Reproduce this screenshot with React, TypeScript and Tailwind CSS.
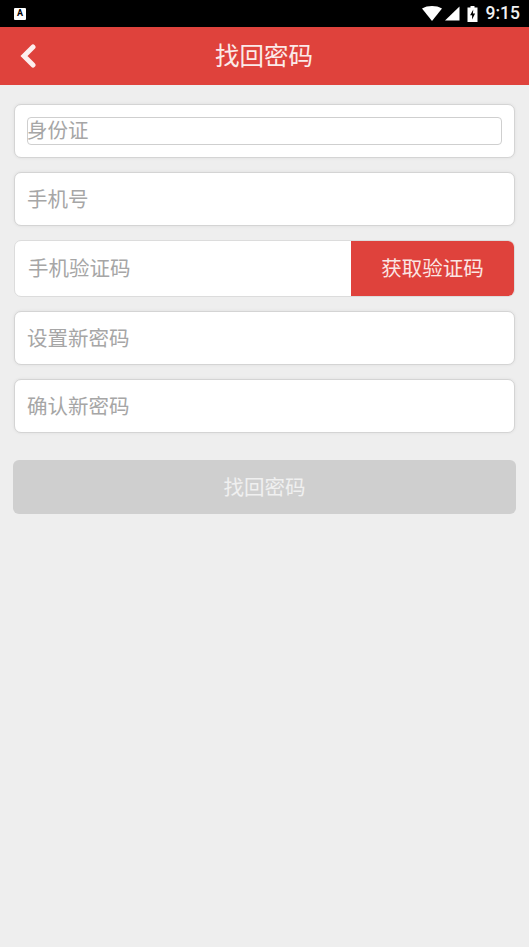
const cjk = "font-['Roboto','Noto_Sans_CJK_SC',sans-serif]";

function Field({ label }: { label: string }) {
  return (
    <div className="flex h-[54px] items-center rounded-[7px] border border-[#d4d4d4] bg-white pl-[12px] pt-[2px] shadow-[0_0_3px_#dcdcdc]">
      <span className="text-[20.5px] leading-none text-[#a6a6a6]">{label}</span>
    </div>
  );
}

function StatusBar() {
  return (
    <div className="flex h-[27px] items-center bg-black pl-[14px] pr-[9px]">
      <div className="flex h-[12px] w-[12px] items-center justify-center rounded-[1px] bg-white text-[9px] font-bold leading-none text-black">
        A
      </div>
      <div className="ml-auto flex items-center">
        <svg width="20" height="15" viewBox="0 0 20 15" className="mr-[2px]">
          <path d="M0 2.5 C5.5 -0.8 14.5 -0.8 20 2.5 L10 15 Z" fill="#fff" />
        </svg>
        <svg width="16" height="15" viewBox="0 0 16 15" className="mr-[7px]">
          <path d="M15.5 0.5 V14.5 H1 Z" fill="#fff" />
        </svg>
        <svg width="11" height="16" viewBox="0 0 10 16" className="mr-[8px]">
          <path
            fillRule="evenodd"
            d="M3 0 H7 V1.5 H10 V16 H0 V1.5 H3 Z M5.8 3.5 L2.6 9.2 H4.6 V13.5 L7.6 7.6 H5.4 Z"
            fill="#fff"
          />
        </svg>
        <span className="font-['Roboto',sans-serif] text-[17.5px] font-medium leading-none text-[#f2f2f2]">9:15</span>
      </div>
    </div>
  );
}

export default function App() {
  return (
    <div className={`flex h-[947px] w-[529px] flex-col bg-[#eeeeee] ${cjk}`}>
      <StatusBar />
      <header className="relative flex h-[58px] items-center justify-center bg-[#df423c] pt-[2px] pr-[1px]">
        <svg width="16" height="24" viewBox="0 0 16 24" className="absolute left-[20px] top-[17px]">
          <polyline points="13,3 4,12 13,21" fill="none" stroke="#fdeeee" strokeWidth="5" strokeLinecap="round" strokeLinejoin="miter" />
        </svg>
        <h1 className="text-[24.5px] font-normal leading-none text-[#fbeae9]">找回密码</h1>
      </header>

      <main className="flex flex-col px-[14px] pt-[19px]">
        <div className="flex h-[54px] items-center rounded-[7px] border border-[#d4d4d4] bg-white px-[12px] shadow-[0_0_3px_#dcdcdc]">
          <div className="flex h-[28px] w-full items-center rounded-[4px] border border-[#cfcfcf] pt-[1px]">
            <span className="-ml-px text-[20.5px] leading-none text-[#a6a6a6]">身份证</span>
          </div>
        </div>
        <div className="mt-[14px]">
          <Field label="手机号" />
        </div>
        <div className="mt-[14px] flex h-[57px] overflow-hidden rounded-[7px] border border-[#dcdcdc] bg-white">
          <div className="flex flex-1 items-center pl-[13px] pt-[2px]">
            <span className="text-[20.5px] leading-none text-[#a6a6a6]">手机验证码</span>
          </div>
          <button className="flex w-[163px] items-center justify-center bg-[#df423c] pt-[2px] text-[20.5px] leading-none text-[#fbe6e4]">
            获取验证码
          </button>
        </div>
        <div className="mt-[14px]">
          <Field label="设置新密码" />
        </div>
        <div className="mt-[14px]">
          <Field label="确认新密码" />
        </div>
        <button className="-mx-px mt-[27px] flex h-[54px] items-center justify-center rounded-[6px] bg-[#cfcfcf] pt-[2px] text-[20.5px] leading-none text-[#f0f0f0]">
          找回密码
        </button>
      </main>
    </div>
  );
}
